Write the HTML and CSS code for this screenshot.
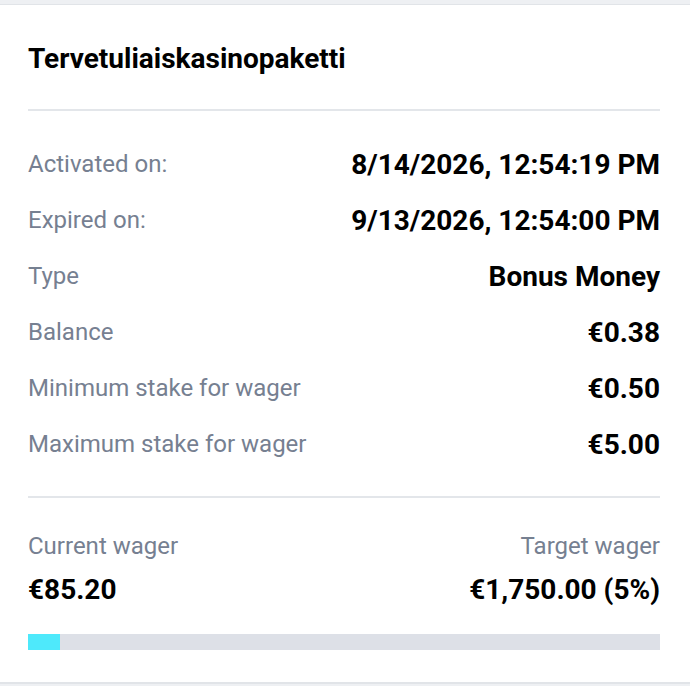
FILE: index.html
```html
<!DOCTYPE html>
<html lang="en">
<head>
    <meta charset="UTF-8">
    <meta name="viewport" content="width=device-width, initial-scale=1.0">
    <title>Bonus details</title>
    <link rel="stylesheet" href="styles.css">
</head>
<body>

    <div class="card">
        <div class="card-header">
            <h2>Tervetuliaiskasinopaketti</h2>
        </div>

        <div class="details">
            <div class="row">
                <span class="label">Activated on:</span>
                <span class="value">8/14/2026, 12:54:19 PM</span>
            </div>
            <div class="row">
                <span class="label">Expired on:</span>
                <span class="value">9/13/2026, 12:54:00 PM</span>
            </div>
            <div class="row">
                <span class="label">Type</span>
                <span class="value">Bonus Money</span>
            </div>
            <div class="row">
                <span class="label">Balance</span>
                <span class="value">€0.38</span>
            </div>
            <div class="row">
                <span class="label">Minimum stake for wager</span>
                <span class="value">€0.50</span>
            </div>
            <div class="row">
                <span class="label">Maximum stake for wager</span>
                <span class="value">€5.00</span>
            </div>
        </div>

        <div class="wager">
            <div class="wager-labels">
                <span>Current wager</span>
                <span>Target wager</span>
            </div>
            <div class="wager-values">
                <span>€85.20</span>
                <span>€1,750.00 (5%)</span>
            </div>
            <div class="progress">
                <div class="progress-fill" style="width: 5%"></div>
            </div>
        </div>
    </div>

</body>
</html>
```

FILE: styles.css
```css
body {
    margin: 0;
    background: #eef0f3;
    font-family: Roboto, "Liberation Sans", Arial, sans-serif;
    color: #000;
}

.card {
    margin-top: 4px;
    background: #fff;
    border-top: 1px solid #e1e4e8;
    border-bottom: 2px solid #e1e4e8;
    padding: 0 30px 0 28px;
    height: 680px;
    box-sizing: border-box;
}

.card-header {
    padding: 40px 0 36px;
    border-bottom: 2px solid #e3e6ea;
}

.card-header h2 {
    margin: 0;
    font-size: 28px;
    line-height: 28px;
    font-weight: 700;
}

.details {
    padding: 25px 0 24px;
    border-bottom: 2px solid #e3e6ea;
}

.row {
    display: flex;
    justify-content: space-between;
    align-items: center;
    height: 56px;
}

.label {
    font-size: 24px;
    color: #768091;
}

.value {
    font-size: 28px;
    font-weight: 700;
}

.wager {
    padding-top: 34px;
}

.wager-labels,
.wager-values {
    display: flex;
    justify-content: space-between;
}

.wager-labels {
    font-size: 24px;
    line-height: 28px;
    color: #768091;
}

.wager-values {
    margin-top: 14px;
    font-size: 28px;
    line-height: 32px;
    font-weight: 700;
}

.progress {
    margin-top: 28px;
    height: 16px;
    background: #dde0e7;
}

.progress-fill {
    height: 100%;
    background: #4ee9fb;
}
```
